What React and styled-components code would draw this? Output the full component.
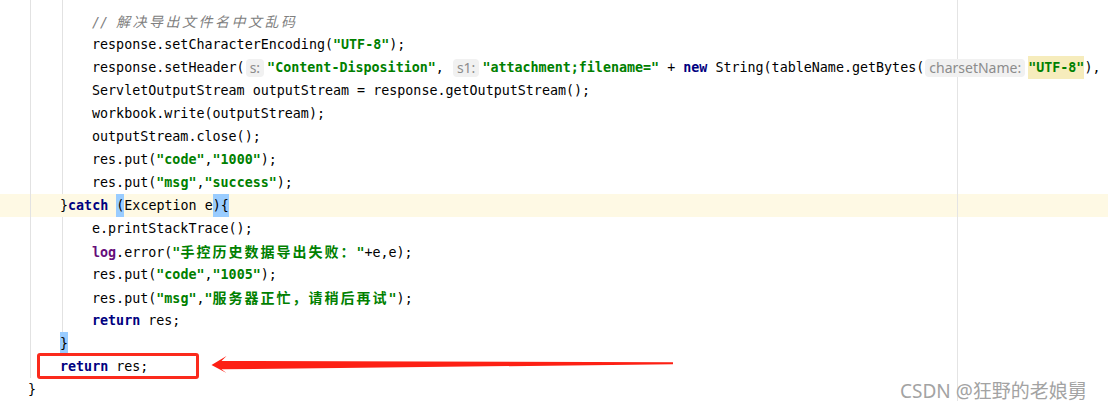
import React from 'react';
import styled, { createGlobalStyle } from 'styled-components';

const Global = createGlobalStyle`
  html, body { margin: 0; padding: 0; background: #fff; }
  body { overflow: hidden; }
`;

const MARGIN = 'linear-gradient(to right, transparent 957px, #e4e4e4 957px, #e4e4e4 958px, transparent 958px)';

const Editor = styled.div`
  position: relative;
  width: 1108px;
  height: 410px;
  overflow: hidden;
  background: #fff;
  font-family: "DejaVu Sans Mono", "Liberation Mono", monospace;
  font-size: 13.35px;
  color: #000;
`;

const Row = styled.div`
  display: flex;
  height: ${p => p.$h || 23}px;
  padding-left: 28px;
  overflow: hidden;
  background: ${MARGIN}, ${p => (p.$caret ? '#fef9e4' : 'transparent')};
`;

const Indent = styled.div`
  flex: none;
  width: 32px;
  height: 100%;
  background: ${p => (p.$guide ? 'linear-gradient(to right, transparent 2px, #e2e2e2 2px, #e2e2e2 3px, transparent 3px)' : 'none')};
`;

const Code = styled.div`
  white-space: pre;
  line-height: 23px;
`;

const Kw = styled.span`
  color: #000080;
  font-weight: bold;
`;

const Str = styled.span`
  color: #008000;
  font-weight: bold;
`;

const Cm = styled.span`
  color: #808080;
  font-style: italic;
`;

const Fld = styled.span`
  color: #660e7a;
  font-weight: bold;
`;

const Cjk = styled.span`
  font-family: "Noto Sans CJK SC", sans-serif;
  font-size: 14px;
  letter-spacing: ${p => p.$ls || 2}px;
`;

const Brace = styled.span`
  display: inline-block;
  height: 23px;
  vertical-align: top;
  background: #99ccff;
`;

const Usage = styled.span`
  display: inline-block;
  height: 23px;
  vertical-align: top;
  background: #f6ecbc;
`;

const Hint = styled.span`
  display: inline-block;
  height: 18px;
  line-height: 18px;
  margin: 0 3px 0 1px;
  padding: 0 4px;
  vertical-align: middle;
  border-radius: 4px;
  background: #f1f1f1;
  color: #8c8c8c;
  font-family: "Noto Sans", "Open Sans", sans-serif;
  font-size: 14px;
  font-style: normal;
  font-weight: normal;
`;

const Box = styled.div`
  position: absolute;
  left: 37px;
  top: 353px;
  width: 162px;
  height: 26px;
  box-sizing: border-box;
  border: 3px solid #fb2a1c;
  border-radius: 3px;
`;

const Arrow = styled.svg`
  position: absolute;
  left: 0;
  top: 0;
`;

const Watermark = styled.div`
  position: absolute;
  left: 900px;
  top: 379px;
  font-family: "Noto Sans", "Noto Sans CJK SC", sans-serif;
  font-size: 19px;
  line-height: 24px;
  color: #a3a3a3;
  white-space: nowrap;
`;

const rows = [
  { g: [1, 1], code: <Cm>// <Cjk $ls={2.5}>解决导出文件名中文乱码</Cjk></Cm> },
  { g: [1, 1], code: <>response.setCharacterEncoding(<Str>"UTF-8"</Str>);</> },
  {
    g: [1, 1],
    code: (
      <>
        response.setHeader(<Hint>s:</Hint><Str>"Content-Disposition"</Str>, <Hint>s1:</Hint>
        <Str>"attachment;filename="</Str> + <Kw>new</Kw> String(tableName.getBytes(<Hint>charsetName:</Hint>
        <Usage><Str>"UTF-8"</Str></Usage>),
      </>
    ),
  },
  { g: [1, 1], code: <>ServletOutputStream outputStream = response.getOutputStream();</> },
  { g: [1, 1], code: <>workbook.write(outputStream);</> },
  { g: [1, 1], code: <>outputStream.close();</> },
  { g: [1, 1], code: <>res.put(<Str>"code"</Str>,<Str>"1000"</Str>);</> },
  { g: [1, 1], code: <>res.put(<Str>"msg"</Str>,<Str>"success"</Str>);</> },
  {
    g: [1],
    caret: true,
    code: (
      <>
        {'}'}<Kw>catch</Kw> <Brace>(</Brace>Exception e<Brace>){'{'}</Brace>
      </>
    ),
  },
  { g: [1, 1], code: <>e.printStackTrace();</> },
  { g: [1, 1], code: <><Fld>log</Fld>.error(<Str>"<Cjk>手控历史数据导出失败：</Cjk>"</Str>+e,e);</> },
  { g: [1, 1], code: <>res.put(<Str>"code"</Str>,<Str>"1005"</Str>);</> },
  { g: [1, 1], code: <>res.put(<Str>"msg"</Str>,<Str>"<Cjk>服务器正忙，请稍后再试</Cjk>"</Str>);</> },
  { g: [1, 1], code: <><Kw>return</Kw> res;</> },
  { g: [1], code: <Brace>{'}'}</Brace> },
  { g: [1], code: <><Kw>return</Kw> res;</> },
  { g: [], code: <>{'}'}</> },
];

export default function App() {
  return (
    <Editor>
      <Global />
      <Row $h={10}>
        <Indent $guide />
        <Indent $guide />
      </Row>
      {rows.map((r, i) => (
        <Row key={i} $caret={r.caret}>
          {r.g.map((g, j) => (
            <Indent key={j} $guide={!!g} />
          ))}
          <Code>{r.code}</Code>
        </Row>
      ))}
      <Box />
      <Arrow width="1108" height="410" viewBox="0 0 1108 410">
        <polygon
          points="211.5,365 226.5,356 221.5,361 673,362.3 673,364.3 221.5,369.3 226.5,373"
          fill="#fd2014"
        />
      </Arrow>
      <Watermark>CSDN @狂野的老娘舅</Watermark>
    </Editor>
  );
}
